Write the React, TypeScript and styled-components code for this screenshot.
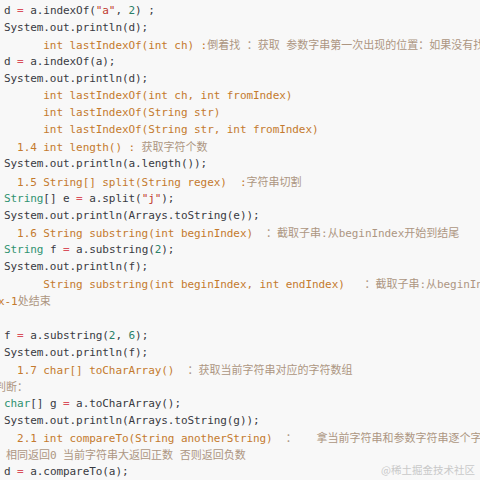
import React from "react";
import styled, { createGlobalStyle } from "styled-components";

const Global = createGlobalStyle`
  html, body { margin: 0; padding: 0; background: #f8f8f8; }
  #root { width: 480px; height: 480px; }
`;

const Page = styled.div`
  position: relative;
  width: 480px;
  height: 480px;
  overflow: hidden;
  background: #f8f8f8;
`;

const Code = styled.pre`
  margin: 0;
  padding: 1.5px 0 0 4px;
  font-family: "DejaVu Sans Mono", "Noto Sans CJK SC", monospace;
  font-size: 11px;
  letter-spacing: -0.07px;
  line-height: 17.11px;
  color: #383a42;
  white-space: pre;
`;

const Line = styled.div<{ $shift?: number }>`
  height: 17.11px;
  margin-left: ${(p) => p.$shift ?? 0}px;
`;

const colors: Record<string, string> = {
  p: "#383a42",
  k: "#c47a2e",
  g: "#2f9270",
  o: "#d9505c",
  n: "#2a7f68",
  s: "#c0392f",
  c: "#ad9682",
};

const Tok = styled.span<{ $c: string }>`
  color: ${(p) => colors[p.$c]};
`;

const Cjk = styled.span`
  font-family: "Noto Sans CJK SC", sans-serif;
  font-size: 11px;
  letter-spacing: 0;
  color: #ad9682;
`;

const Watermark = styled.div`
  position: absolute;
  right: 5px;
  bottom: 2px;
  font-family: "Noto Sans CJK SC", sans-serif;
  font-size: 10.5px;
  line-height: 16px;
  color: #c9c9c9;
`;

type T = [string, string];
type L = { t: T[]; shift?: number };

const lines: L[] = [
  { t: [["p", "d "], ["o", "="], ["p", " a.indexOf("], ["s", '"a"'], ["p", ", "], ["n", "2"], ["p", ") ;"]] },
  { t: [["p", "System.out.println(d);"]] },
  { t: [["k", "      int lastIndexOf(int ch) :"], ["c", "倒着找 ：获取 参数字串第一次出现的位置：如果没有找到返回-1"]] },
  { t: [["p", "d "], ["o", "="], ["p", " a.indexOf(a);"]] },
  { t: [["p", "System.out.println(d);"]] },
  { t: [["k", "      int lastIndexOf(int ch, int fromIndex)"]] },
  { t: [["k", "      int lastIndexOf(String str)"]] },
  { t: [["k", "      int lastIndexOf(String str, int fromIndex)"]] },
  { t: [["k", "  1.4 int length() : "], ["c", "获取字符个数"]] },
  { t: [["p", "System.out.println(a.length());"]] },
  { t: [["k", "  1.5 String[] split(String regex)  :"], ["c", "字符串切割"]] },
  { t: [["g", "String"], ["p", "[] e "], ["o", "="], ["p", " a.split("], ["s", '"j"'], ["p", ");"]] },
  { t: [["p", "System.out.println(Arrays.toString(e));"]] },
  { t: [["k", "  1.6 String substring(int beginIndex)"], ["p", "  "], ["c", "：截取子串:从beginIndex开始到结尾"]] },
  { t: [["g", "String"], ["p", " f "], ["o", "="], ["p", " a.substring("], ["n", "2"], ["p", ");"]] },
  { t: [["p", "System.out.println(f);"]] },
  { t: [["k", "      String substring(int beginIndex, int endIndex)"], ["p", "   "], ["c", "：截取子串:从beginIndex到endIndex-1处结束"]] },
  { t: [["k", "x-1"], ["c", "处结束"]], shift: -6 },
  { t: [] },
  { t: [["p", "f "], ["o", "="], ["p", " a.substring("], ["n", "2"], ["p", ", "], ["n", "6"], ["p", ");"]] },
  { t: [["p", "System.out.println(f);"]] },
  { t: [["k", "  1.7 char[] toCharArray()"], ["p", "  "], ["c", "：获取当前字符串对应的字符数组"]] },
  { t: [["c", "判断："]], shift: -9 },
  { t: [["g", "char"], ["p", "[] g "], ["o", "="], ["p", " a.toCharArray();"]] },
  { t: [["p", "System.out.println(Arrays.toString(g));"]] },
  { t: [["k", "  2.1 int compareTo(String anotherString)"], ["p", "  "], ["c", "：   拿当前字符串和参数字符串逐个字符比较"]] },
  { t: [["c", "相同返回0 当前字符串大返回正数 否则返回负数"]], shift: 2 },
  { t: [["p", "d "], ["o", "="], ["p", " a.compareTo(a);"]] },
];

const cjkRe = /([\u3000-\u9fff\uff00-\uffef]+)/;

function renderTok([c, text]: T, i: number) {
  if (c !== "c") return <Tok key={i} $c={c}>{text}</Tok>;
  const parts = text.split(cjkRe).filter((s) => s.length > 0);
  return (
    <Tok key={i} $c="c">
      {parts.map((s, j) => (cjkRe.test(s) ? <Cjk key={j}>{s}</Cjk> : <React.Fragment key={j}>{s}</React.Fragment>))}
    </Tok>
  );
}

export default function App() {
  return (
    <Page>
      <Global />
      <Code>
        {lines.map((l, i) => (
          <Line key={i} $shift={l.shift}>
            {l.t.map(renderTok)}
          </Line>
        ))}
      </Code>
      <Watermark>@稀土掘金技术社区</Watermark>
    </Page>
  );
}
